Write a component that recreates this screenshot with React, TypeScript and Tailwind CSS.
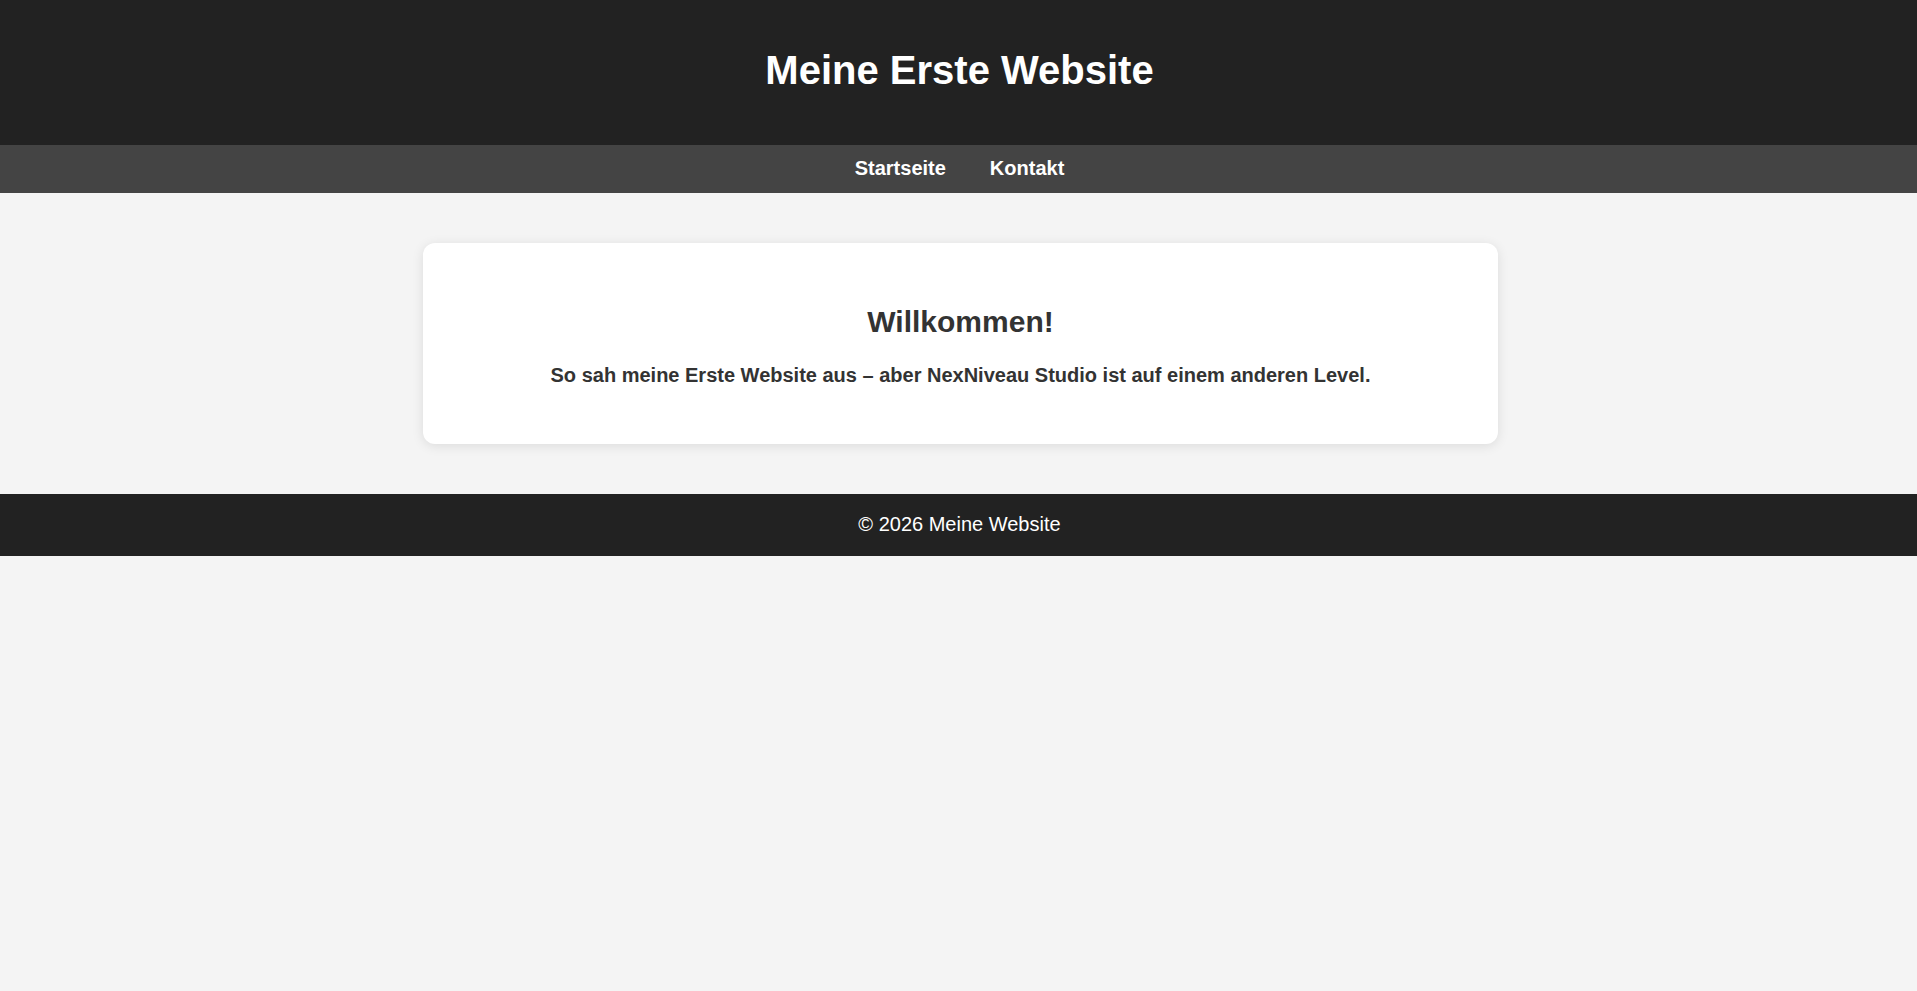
export default function App() {
  return (
    <div className="min-h-screen bg-[#f4f4f4] font-['Liberation_Sans',Arial,sans-serif] text-[#333]">
      <header className="bg-[#222] pt-[47px] pb-[52px] pl-[2px] text-center text-white">
        <h1 className="text-[40px] font-bold leading-[46px]">Meine Erste Website</h1>
      </header>

      <nav className="flex justify-center gap-[44px] bg-[#444] pt-[12px] pb-[13px] pl-[2px]">
        <a href="#" className="text-[20px] font-bold leading-[23px] text-white">
          Startseite
        </a>
        <a href="#" className="text-[20px] font-bold leading-[23px] text-white">
          Kontakt
        </a>
      </nav>

      <main className="py-[50px]">
        <section className="mx-auto w-[1075px] translate-x-[2px] rounded-[12px] bg-white pt-[61px] pb-[57px] text-center shadow-[0_2px_12px_rgba(0,0,0,0.1)]">
          <h2 className="text-[30px] font-bold leading-[35px]">Willkommen!</h2>
          <p className="mt-[25px] text-[20px] font-bold leading-[23px]">
            So sah meine Erste Website aus – aber NexNiveau Studio ist auf einem anderen Level.
          </p>
        </section>
      </main>

      <footer className="bg-[#222] pt-[19px] pb-[20px] pl-[2px] text-center text-white">
        <p className="text-[20px] leading-[23px]">© 2026 Meine Website</p>
      </footer>
    </div>
  );
}
